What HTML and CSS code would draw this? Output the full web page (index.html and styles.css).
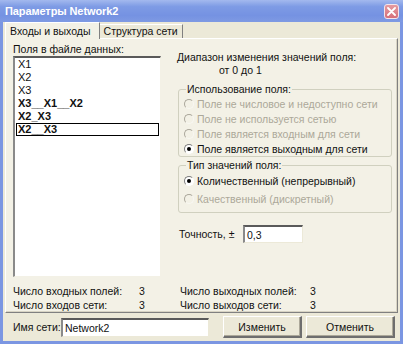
FILE: index.html
```html
<!DOCTYPE html>
<html lang="ru">
<head>
<meta charset="utf-8">
<title>Параметры Network2</title>
<link rel="stylesheet" href="styles.css">
</head>
<body>
<div class="window">
  <div class="titlebar">
    <span class="title">Параметры Network2</span>
    <span class="close"><svg width="9" height="9" viewBox="0 0 9 9"><path d="M1 1 L8 8 M8 1 L1 8" stroke="#fff" stroke-width="1.8" stroke-linecap="round"/></svg></span>
  </div>
  <div class="client">
    <div class="tabs">
      <div class="tab active">Входы и выходы</div>
      <div class="tab">Структура сети</div>
    </div>
    <div class="panel">
      <div class="main">
        <div class="left">
          <div class="label">Поля в файле данных:</div>
          <div class="listbox">
            <div class="item">X1</div>
            <div class="item">X2</div>
            <div class="item">X3</div>
            <div class="item bold">X3__X1__X2</div>
            <div class="item bold">X2_X3</div>
            <div class="item bold focus">X2__X3</div>
          </div>
        </div>
        <div class="right">
          <div class="range">Диапазон изменения значений поля:</div>
          <div class="range-val">от 0 до 1</div>
          <fieldset class="group g1">
            <legend>Использование поля:</legend>
            <div class="opt disabled"><span class="radio"></span>Поле не числовое и недоступно сети</div>
            <div class="opt disabled"><span class="radio"></span>Поле не используется сетью</div>
            <div class="opt disabled"><span class="radio"></span>Поле является входным для сети</div>
            <div class="opt"><span class="radio checked"></span>Поле является выходным для сети</div>
          </fieldset>
          <fieldset class="group g2">
            <legend>Тип значений поля:</legend>
            <div class="opt"><span class="radio checked"></span>Количественный (непрерывный)</div>
            <div class="opt disabled"><span class="radio"></span>Качественный (дискретный)</div>
          </fieldset>
          <div class="precision">
            <span class="prec-label">Точность, ±</span>
            <div class="edit prec-edit">0,3</div>
          </div>
        </div>
      </div>
      <div class="stats">
        <span>Число входных полей:</span><span>3</span><span>Число выходных полей:</span><span>3</span>
        <span>Число входов сети:</span><span>3</span><span>Число выходов сети:</span><span>3</span>
      </div>
    </div>
    <div class="bottom">
      <span class="name-label">Имя сети:</span>
      <div class="edit name-edit">Network2</div>
      <div class="button b1">Изменить</div>
      <div class="button b2">Отменить</div>
    </div>
  </div>
</div>
</body>
</html>
```

FILE: styles.css
```css
html, body {
  margin: 0;
  padding: 0;
  background: #fff;
}
body {
  font-family: "Liberation Sans", Arial, sans-serif;
  font-size: 10.5px;
  color: #111;
}
.window {
  width: 403px;
  height: 344px;
  box-sizing: border-box;
  background: #7b96e2;
  padding: 0 3px 3px 3px;
  display: flex;
  flex-direction: column;
}
.titlebar {
  height: 22px;
  flex: none;
  margin: 0 -3px;
  padding: 0 4px 0 5px;
  display: flex;
  align-items: center;
  justify-content: space-between;
  background: linear-gradient(#a3b9ee 0%, #7e9be5 30%, #7592e2 70%, #7f9ae3 100%);
}
.title {
  color: #fff;
  font-weight: bold;
  font-size: 11px;
  letter-spacing: -0.1px;
}
.close {
  width: 15px;
  height: 15px;
  box-sizing: border-box;
  border: 1px solid #f4e4ea;
  border-radius: 3px;
  background: linear-gradient(#e49aa0, #d6707a);
  display: flex;
  align-items: center;
  justify-content: center;
}
.client {
  flex: 1;
  background: #ece9d8;
  display: flex;
  flex-direction: column;
}
.tabs {
  height: 16px;
  flex: none;
  display: flex;
  align-items: flex-end;
  padding-left: 2px;
  position: relative;
  z-index: 1;
}
.tab {
  height: 14px;
  line-height: 13px;
  padding: 0 4px 0 4px;
  border-top: 1px solid #fff;
  border-right: 1px solid #808080;
  box-sizing: border-box;
  white-space: nowrap;
}
.tab.active {
  height: 17px;
  margin-bottom: -1px;
  line-height: 16px;
  padding: 0 8px 0 4px;
  background: #f3f1e6;
  border-left: 1px solid #fff;
}
.panel {
  height: 275px;
  flex: none;
  margin: 0 2px;
  box-sizing: border-box;
  background: #f3f1e6;
  border-top: 1px solid #fff;
  border-left: 1px solid #fff;
  border-right: 1px solid #808080;
  border-bottom: 1px solid #808080;
  box-shadow: inset -1px -1px 0 #d8d4c4;
  padding: 4px 5px 0 7px;
  display: flex;
  flex-direction: column;
}
.main {
  display: flex;
  gap: 17px;
}
.left {
  width: 148px;
  flex: none;
}
.label {
  line-height: 13px;
  height: 13px;
}
.listbox {
  height: 221px;
  box-sizing: border-box;
  background: #fff;
  border-style: solid;
  border-width: 2px 1px 1px 2px;
  border-color: #5a5a5a #f3f1e6 #f3f1e6 #8a8a8a;
  padding: 0 1px;
}
.item {
  height: 13px;
  line-height: 13px;
  padding-left: 2px;
  box-sizing: border-box;
  font-size: 11px;
}
.item.bold {
  font-weight: bold;
}
.item.focus {
  border: 1px solid #000;
  line-height: 11px;
  padding-left: 1px;
}
.right {
  width: 214px;
  flex: none;
  display: flex;
  flex-direction: column;
}
.range {
  margin-top: 8px;
  line-height: 13px;
  margin-left: -1px;
}
.range-val {
  line-height: 13px;
  padding-left: 41px;
}
.group {
  margin: 0;
  padding: 0 4px 0 5px;
  border: 1px solid #d0d0bf;
  border-radius: 3px;
}
.group legend {
  padding: 0 1px;
  margin-left: 2px;
  line-height: 13px;
}
.g1 {
  margin-top: 6px;
  padding-bottom: 0;
}
.g1 .opt {
  height: 15px;
}
.g2 {
  margin-top: 2px;
  padding-bottom: 4px;
}
.g2 .opt {
  height: 18px;
}
.opt {
  display: flex;
  align-items: center;
  gap: 3px;
  white-space: nowrap;
}
.opt.disabled {
  color: #aca899;
}
.radio {
  width: 10px;
  height: 10px;
  flex: none;
  box-sizing: border-box;
  border-radius: 50%;
  border: 1px solid;
  border-color: #7d7d7d #fff #fff #7d7d7d;
  background: #fff;
  display: flex;
  align-items: center;
  justify-content: center;
}
.opt.disabled .radio {
  background: transparent;
  border-color: #aaa69a #f8f7f2 #f8f7f2 #aaa69a;
}
.radio.checked::after {
  content: "";
  width: 4px;
  height: 4px;
  border-radius: 50%;
  background: #000;
}
.precision {
  margin-top: 12px;
  display: flex;
  align-items: center;
  padding-left: 1px;
}
.prec-label {
  width: 64px;
  flex: none;
}
.edit {
  box-sizing: border-box;
  background: #fff;
  border-style: solid;
  border-width: 2px 1px 1px 2px;
  border-color: #5a5a5a #ece9d8 #ece9d8 #8a8a8a;
  padding-left: 2px;
  display: flex;
  align-items: center;
}
.prec-edit {
  width: 60px;
  height: 18px;
}
.stats {
  margin-top: 7px;
  display: grid;
  grid-template-columns: 126px 41px 130px auto;
  grid-auto-rows: 14px;
  line-height: 14px;
}
.bottom {
  flex: 1;
  display: flex;
  align-items: center;
  padding-left: 10px;
}
.name-label {
  width: 48px;
  flex: none;
  white-space: nowrap;
}
.name-edit {
  width: 148px;
  height: 19px;
}
.button {
  height: 22px;
  box-sizing: border-box;
  background: #ece9d8;
  border-style: solid;
  border-width: 1px 2px 2px 1px;
  border-color: #fff #6e6e6e #6e6e6e #fff;
  box-shadow: inset -1px -1px 0 #aca899;
  display: flex;
  align-items: center;
  justify-content: center;
}
.b1 {
  width: 79px;
  margin-left: 14px;
}
.b2 {
  width: 89px;
  margin-left: 4px;
}
```
